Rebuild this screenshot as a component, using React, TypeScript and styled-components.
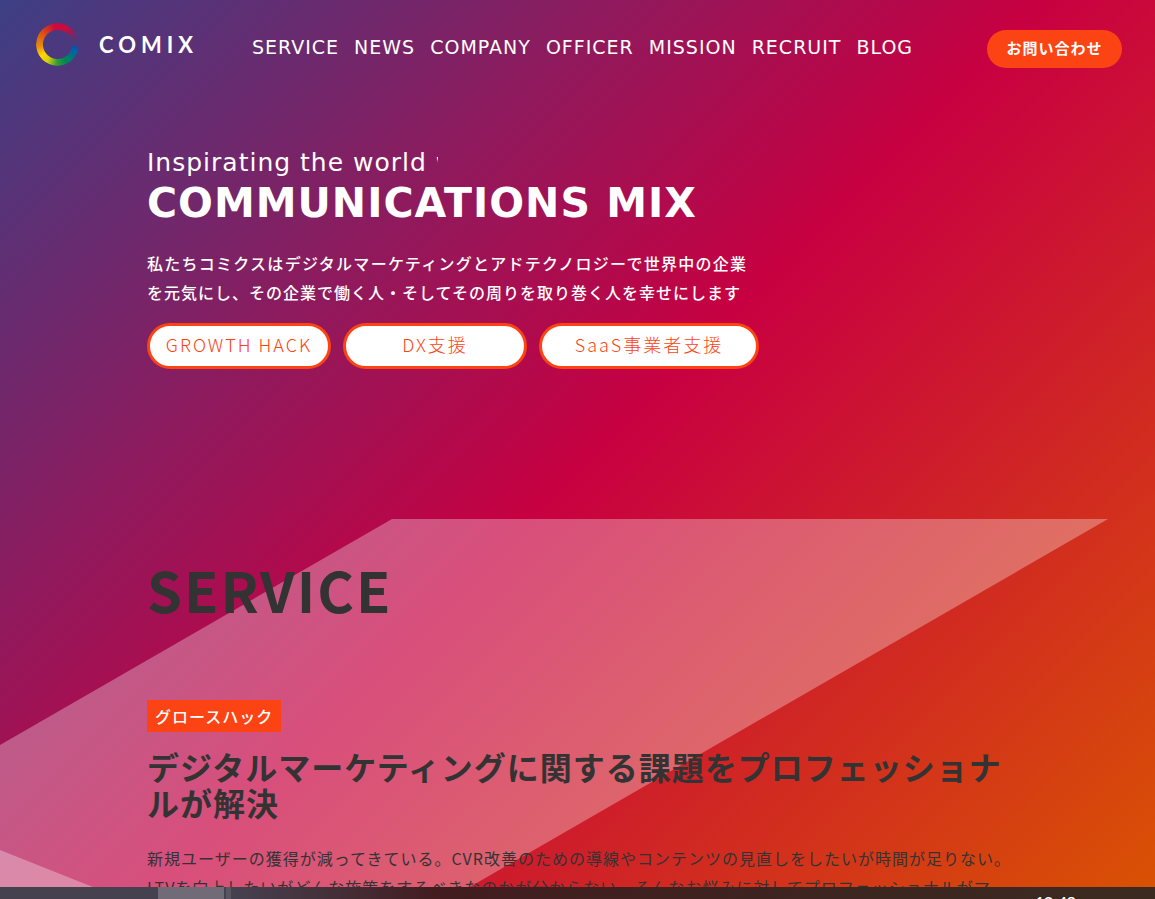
import React from "react";
import styled, { createGlobalStyle } from "styled-components";

const jp = `"Noto Sans CJK JP", sans-serif`;
const latin = `Verdana, "DejaVu Sans", "Noto Sans CJK JP", sans-serif`;
const accent = "#fc4314";
const ink = "#333333";

const GlobalStyle = createGlobalStyle`
  *, *::before, *::after { box-sizing: border-box; }
  body { margin: 0; font-family: ${jp}; color: ${ink}; overflow: hidden; }
  h1, h2, h3, p, ul { margin: 0; padding: 0; }
`;

const Page = styled.div`
  position: relative;
  height: 100vh;
  overflow: hidden;
  background: linear-gradient(135deg, #3d3f85 0%, #c80041 51%, #da5600 102%);
`;

const Shapes = styled.svg`
  position: absolute;
  top: 519px;
  left: 0;
  width: 1155px;
  height: 380px;
  fill: #fff;
  fill-opacity: 0.31;
`;

const Header = styled.header`
  position: relative;
  display: flex;
  align-items: center;
  height: 94px;
  padding: 0 33px 0 36px;
`;

const Logo = styled.a`
  display: flex;
  align-items: center;
  gap: 20px;
  width: 216px;
  padding-bottom: 5px;
  color: #fff;
  text-decoration: none;
`;

const Ring = styled.span`
  width: 43px;
  height: 43px;
  border-radius: 50%;
  background: conic-gradient(from 0deg, #cc0a3c 0deg, #cc0a3c 25deg, rgba(204, 10, 60, 0) 75deg, rgba(0, 80, 170, 0) 96deg, #0057ae 97deg, #0063a8 112deg, #00894e 155deg, #2f9a3c 180deg, #d8d010 212deg, #ffd800 235deg, #e88a10 265deg, #dc5310 305deg, #cc0a3c 350deg);
  mask: radial-gradient(circle, transparent 14px, #000 15px);
`;

const Wordmark = styled.span`
  font: 700 22px/32px Lato, sans-serif;
  letter-spacing: 5px;
`;

const Nav = styled.nav`
  flex: 1;
  display: flex;
  gap: 15px;
`;

const NavLink = styled.a`
  font: 19px/24px ${latin};
  letter-spacing: 1px;
  color: #fff;
  text-decoration: none;
`;

const Contact = styled.button`
  width: 135px;
  height: 38px;
  margin-top: 4px;
  padding: 0 0 2px;
  border: 0;
  border-radius: 19px;
  background: ${accent};
  color: #fff;
  font: 700 15px/20px ${jp};
  letter-spacing: 1px;
`;

const Content = styled.main`
  position: relative;
  width: 75%;
  max-width: 1000px;
  margin-left: 147px;
`;

const Hero = styled.section`
  padding-top: 51px;
  color: #fff;
`;

const Typed = styled.p`
  width: 291px;
  overflow: hidden;
  white-space: nowrap;
  font: 25px/36px ${latin};
  letter-spacing: 1px;
`;

const Title = styled.h1`
  font: 700 41px/44px ${latin};
  letter-spacing: 1px;
`;

const Lead = styled.p`
  width: 600px;
  margin-top: 24px;
  font-size: 16px;
  font-weight: 500;
  line-height: 29px;
  letter-spacing: 1px;
  text-align: justify;
`;

const Actions = styled.div`
  display: flex;
  gap: 12px;
  margin-top: 16px;
`;

const Pill = styled.button<{ $wide?: boolean }>`
  width: ${(p) => (p.$wide ? 220 : 184)}px;
  height: 46px;
  padding: 0 0 4px;
  border: 3px solid ${accent};
  border-radius: 23px;
  background: #fff;
  color: ${accent};
  font: 300 18px/24px ${jp};
  letter-spacing: 2px;
`;

const Service = styled.section`
  padding-top: 180px;
`;

const SectionTitle = styled.h2`
  font-size: 56px;
  font-weight: 700;
  line-height: 80px;
  letter-spacing: 2px;
`;

const Tag = styled.span`
  display: inline-block;
  margin-top: 71px;
  padding: 0 8px;
  background: ${accent};
  color: #fff;
  font-size: 16px;
  font-weight: 500;
  line-height: 32px;
  letter-spacing: 1px;
`;

const Subtitle = styled.h3`
  margin-top: 16px;
  font-size: 32px;
  font-weight: 700;
  line-height: 36px;
  letter-spacing: 1px;
`;

const Body = styled.p`
  margin-top: 24px;
  font-size: 16px;
  line-height: 29px;
  letter-spacing: 1px;
`;

const Taskbar = styled.footer`
  position: absolute;
  right: 0;
  bottom: 0;
  left: 0;
  display: flex;
  justify-content: space-between;
  height: 12px;
  padding: 0 79px 0 158px;
  overflow: hidden;
  background: linear-gradient(90deg, #46414f 0%, #464150 20%, #421c1f 38%, #3c2620 75%, #3b2a20 100%);
`;

const TaskWindow = styled.span`
  width: 73px;
  border-right: 5px solid #5a5562;
  background: linear-gradient(90deg, #706b77 66px, #46414f 66px);
`;

const Clock = styled.time`
  padding-top: 6px;
  color: #fff;
  font: 500 16px/20px "Noto Sans", sans-serif;
`;

const links = ["SERVICE", "NEWS", "COMPANY", "OFFICER", "MISSION", "RECRUIT", "BLOG"];

export default function App() {
  return (
    <Page>
      <GlobalStyle />
      <Shapes viewBox="0 0 1155 380" aria-hidden="true">
        <polygon points="392,0 1108,0 449,380 0,380 0,226" />
        <polygon points="0,331 123,380 0,380" />
      </Shapes>
      <Header>
        <Logo href="#">
          <Ring />
          <Wordmark>COMIX</Wordmark>
        </Logo>
        <Nav>
          {links.map((label) => (
            <NavLink key={label} href={`#${label.toLowerCase()}`}>{label}</NavLink>
          ))}
        </Nav>
        <Contact>お問い合わせ</Contact>
      </Header>
      <Content>
        <Hero>
          <Typed>Inspirating the world with</Typed>
          <Title>COMMUNICATIONS MIX</Title>
          <Lead>私たちコミクスはデジタルマーケティングとアドテクノロジーで世界中の企業を元気にし、その企業で働く人・そしてその周りを取り巻く人を幸せにします</Lead>
          <Actions>
            <Pill>GROWTH HACK</Pill>
            <Pill>DX支援</Pill>
            <Pill $wide>SaaS事業者支援</Pill>
          </Actions>
        </Hero>
        <Service id="service">
          <SectionTitle>SERVICE</SectionTitle>
          <Tag>グロースハック</Tag>
          <Subtitle>デジタルマーケティングに関する課題をプロフェッショナルが解決</Subtitle>
          <Body>新規ユーザーの獲得が減ってきている。CVR改善のための導線やコンテンツの見直しをしたいが時間が足りない。LTVを向上したいがどんな施策をするべきなのかが分からない。そんなお悩みに対してプロフェッショナルがマ</Body>
        </Service>
      </Content>
      <Taskbar>
        <TaskWindow />
        <Clock>12:48</Clock>
      </Taskbar>
    </Page>
  );
}
